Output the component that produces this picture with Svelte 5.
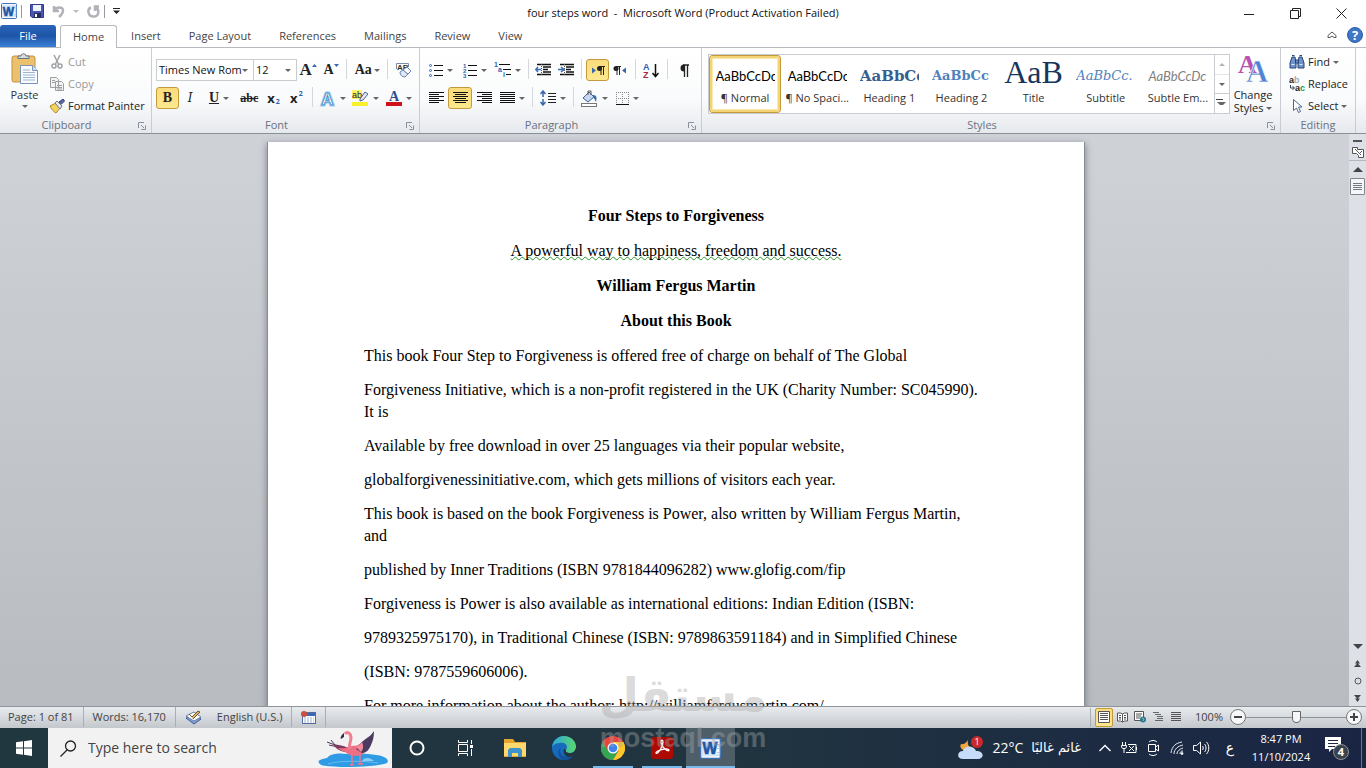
<script lang="ts">
  const tabs = ["Insert", "Page Layout", "References", "Mailings", "Review", "View"];

  const styles = [
    { name: "¶ Normal", sample: "AaBbCcDc", kind: "plain" },
    { name: "¶ No Spaci...", sample: "AaBbCcDc", kind: "plain" },
    { name: "Heading 1", sample: "AaBbCc", kind: "h1" },
    { name: "Heading 2", sample: "AaBbCc", kind: "h2" },
    { name: "Title", sample: "AaB", kind: "title" },
    { name: "Subtitle", sample: "AaBbCc.", kind: "subtitle" },
    { name: "Subtle Em...", sample: "AaBbCcDc", kind: "subtle" },
  ];

  const paragraphs = [
    "This book Four Step to Forgiveness is offered free of charge on behalf of The Global",
    "Forgiveness Initiative, which is a non-profit registered in the UK (Charity Number: SC045990).\nIt is",
    "Available by free download in over 25 languages via their popular website,",
    "globalforgivenessinitiative.com, which gets millions of visitors each year.",
    "This book is based on the book Forgiveness is Power, also written by William Fergus Martin,\nand",
    "published by Inner Traditions (ISBN 9781844096282) www.glofig.com/fip",
    "Forgiveness is Power is also available as international editions: Indian Edition (ISBN:",
    "9789325975170), in Traditional Chinese (ISBN: 9789863591184) and in Simplified Chinese",
    "(ISBN: 9787559606006).",
    "For more information about the author: http://williamfergusmartin.com/",
  ];

  let activeStyle = $state(0);
  let zoom = $state(50);
</script>

{#snippet caret()}<span class="caret"></span>{/snippet}

{#snippet launcher(label: string)}
  <button class="launcher" aria-label={label}>
    <svg width="8" height="8" viewBox="0 0 8 8" fill="none" stroke="#8b919b">
      <path d="M.5 6V.5H6M3 3l3 3M7.5 3.5v4h-4" />
    </svg>
  </button>
{/snippet}

{#snippet lines(kind: string)}
  <svg width="15" height="13" viewBox="0 0 15 13" stroke="#111">
    {#if kind === "left"}
      <path d="M0 .5h15M0 2.5h10M0 4.5h15M0 6.5h10M0 8.5h15M0 10.5h10" />
    {:else if kind === "center"}
      <path d="M0 .5h15M2 2.5h11M0 4.5h15M2 6.5h11M0 8.5h15M2 10.5h11" />
    {:else if kind === "right"}
      <path d="M0 .5h15M5 2.5h10M0 4.5h15M5 6.5h10M0 8.5h15M5 10.5h10" />
    {:else}
      <path d="M0 .5h15M0 2.5h15M0 4.5h15M0 6.5h15M0 8.5h15M0 10.5h15" />
    {/if}
  </svg>
{/snippet}

{#snippet indent(flip: boolean)}
  <svg width="17" height="14" viewBox="0 0 17 14">
    <path d="M2 1.5h14M8 4h8M8 6.5h5M8 9h8M2 11.5h14" stroke="#111" stroke-width="1.4" />
    <path d="M6.500 1v12" stroke="#555" stroke-dasharray="1 1" />
    {#if flip}
      <path d="M0 6.500h5M3 4l3 2.500L3 9" stroke="#3a6db5" stroke-width="1.500" fill="none" />
    {:else}
      <path d="M6 6.500H1M3 4L.8 6.500 3 9" stroke="#3a6db5" stroke-width="1.500" fill="none" />
    {/if}
  </svg>
{/snippet}

{#snippet wordLogo(size: number)}
  <svg width={size} height={size} viewBox="0 0 16 16">
    <rect x=".5" y=".5" width="15" height="15" rx="1" fill="#f4f9fe" stroke="#3f74b8" />
    <path d="M12 3h3v10h-3zM13 5h2M13 8h2M13 11h2" fill="#fff" stroke="#9dbde4" stroke-width=".7" />
    <rect x="1.500" y="2" width="11" height="12" fill="#d8e8f8" />
    <text x="7.500" y="12.500" text-anchor="middle" font-family="Liberation Sans" font-weight="bold" font-size="12" fill="#1d55a4" stroke="#1d55a4" stroke-width=".5">W</text>
  </svg>
{/snippet}

<div class="screen">
  <header class="titlebar">
    <div class="quick">
      {@render wordLogo(16)}
      <span class="bar"></span>
      <button aria-label="Save">
        <svg width="14" height="14" viewBox="0 0 14 14">
          <path d="M.5.500h13v13H2l-1.500-1.500z" fill="#4a55b5" stroke="#30388c" />
          <path d="M3 1h8v6H3z" fill="#eef2fb" />
          <path d="M4 9h7v5H4z" fill="#262d5e" />
          <path d="M5 10h2v3H5z" fill="#fff" />
        </svg>
      </button>
      <button class="undo" aria-label="Undo">
        <svg width="13" height="13" viewBox="0 0 13 13" fill="none" stroke="#b1b3b8" stroke-width="2.500">
          <path d="M2 1v5h5M2.500 5.500C4 2 11 1 11 5.500c0 3-2 4.500-4 6.500" />
        </svg>
        {@render caret()}
      </button>
      <button aria-label="Repeat">
        <svg width="13" height="13" viewBox="0 0 13 13" fill="none" stroke="#b1b3b8" stroke-width="2.500">
          <path d="M4 2.500C0 4 .5 11.500 6.500 11.500S12.500 4 8.500 2.500M8 6V1.500h4" />
        </svg>
      </button>
      <span class="bar"></span>
      <button aria-label="Customize Quick Access Toolbar">
        <svg width="7" height="6" viewBox="0 0 7 6"><path d="M0 0h7v1H0zM0 2.500h7L3.500 6z" fill="#222" /></svg>
      </button>
    </div>
    <h1>four steps word&nbsp; -&nbsp; Microsoft Word (Product Activation Failed)</h1>
    <div class="window">
      <button aria-label="Minimize">
        <svg width="11" height="11" viewBox="0 0 11 11"><path d="M0 6.500h10" stroke="#222" /></svg>
      </button>
      <button aria-label="Restore">
        <svg width="11" height="11" viewBox="0 0 11 11" fill="none" stroke="#222">
          <path d="M.5 2.500h8v8h-8zM2.500 2.500v-2h8v8h-2" />
        </svg>
      </button>
      <button aria-label="Close">
        <svg width="11" height="11" viewBox="0 0 11 11"><path d="M.5.500l10 10M10.500.500l-10 10" stroke="#222" /></svg>
      </button>
    </div>
  </header>

  <nav class="tabs">
    <button class="file">File</button>
    <button class="tab active">Home</button>
    {#each tabs as tab}
      <button class="tab">{tab}</button>
    {/each}
    <div class="help">
      <button aria-label="Minimize the Ribbon">
        <svg width="10" height="8" viewBox="0 0 10 8">
          <path d="M1 4.500L5 1l4 3.500v2H7L5 5 3 6.500H1z" fill="#fff" stroke="#555" />
        </svg>
      </button>
      <button aria-label="Help">
        <svg width="16" height="16" viewBox="0 0 16 16">
          <circle cx="8" cy="8" r="7.500" fill="#3f76c6" stroke="#2d5ea8" />
          <text x="8" y="12.500" text-anchor="middle" font-family="Open Sans" font-size="13" font-weight="bold" fill="#fff">?</text>
        </svg>
      </button>
    </div>
  </nav>

  <div class="ribbon">
    <section class="group clipboard">
      <div class="content">
        <button class="big paste">
          <svg width="28" height="31" viewBox="0 0 28 31">
            <rect x="1" y="3" width="23" height="26" rx="2" fill="#ecc16c" stroke="#c1914a" />
            <path d="M7 5V3h3c0-3 5-3 5 0h3v2.500H7z" fill="#d7dae0" stroke="#6c7078" />
            <path d="M9.500 12.500h12l5 5v13h-17z" fill="#f8fbff" stroke="#7c94bb" />
            <path d="M21.500 12.500v5h5" fill="#d3e0f3" stroke="#7c94bb" />
            <path d="M12 17h7M12 19.500h12M12 22h12M12 24.500h12M12 27h12" stroke="#9db2d4" />
          </svg>
          <span>Paste</span>
          {@render caret()}
        </button>
        <div class="stack">
          <button class="row" disabled>
            <svg width="16" height="16" viewBox="0 0 16 16" fill="none" stroke="#a0a2a6" stroke-width="1.500">
              <path d="M5 1l4.500 9M11 1L6.500 10" /><circle cx="5" cy="12" r="2" /><circle cx="11" cy="12" r="2" />
            </svg>
            Cut
          </button>
          <button class="row" disabled>
            <svg width="16" height="16" viewBox="0 0 16 16" fill="#f3f3f4" stroke="#9c9ea3">
              <path d="M1.500 1.500h6l2 2v8h-8zM6.500 5.500h6l2 2v7h-8z" /><path d="M3 4.500h3M3 6.500h3M8 9.500h5M8 11.500h5M8 13h5" />
            </svg>
            Copy
          </button>
          <button class="row">
            <svg width="16" height="16" viewBox="0 0 16 16">
              <path d="M1 8l6-3 4 5-4 5c-2-1-5-4-6-7z" fill="#f1d25e" stroke="#a98a2d" />
              <path d="M6 5l2-2 5 5-2 3z" fill="#e8ebf0" stroke="#6b7384" />
              <path d="M10 4l4-3 1.500 2-3 3z" fill="#5569a8" stroke="#33427c" />
            </svg>
            Format Painter
          </button>
        </div>
      </div>
      <footer>Clipboard{@render launcher("Clipboard options")}</footer>
    </section>

    <section class="group font">
      <div class="content two">
        <div class="line">
          <label class="combo name">
            <select aria-label="Font"><option>Times New Roman</option></select>{@render caret()}
          </label>
          <label class="combo size">
            <select aria-label="Font Size"><option>12</option></select>{@render caret()}
          </label>
          <button class="tool w23 serif grow" aria-label="Grow Font">A<svg width="5" height="12" viewBox="0 0 5 12"><path d="M0 3L2.500 0 5 3z" fill="#3a66ae" /></svg></button>
          <button class="tool w23 serif shrink" aria-label="Shrink Font">A<svg width="5" height="12" viewBox="0 0 5 12"><path d="M0 0h5L2.500 3z" fill="#3a66ae" /></svg></button>
          <span class="sep"></span>
          <button class="tool w32 serif case" aria-label="Change Case">Aa{@render caret()}</button>
          <span class="sep"></span>
          <button class="tool w23" aria-label="Clear Formatting">
            <svg width="17" height="17" viewBox="0 0 17 17">
              <path d="M1.500 7V1.500h12V5" fill="none" stroke="#7a8cab" />
              <text x="2" y="8" font-family="Liberation Sans" font-size="8" font-weight="bold" fill="#333">AB</text>
              <path d="M5 10l3-2 5 4-3 3c-3 0-5-2-5-5z" fill="#dfe8f5" stroke="#6b83b0" />
              <path d="M8 8l4-3 4 4-3 3z" fill="#fff" stroke="#6b83b0" />
            </svg>
          </button>
        </div>
        <div class="line">
          <button class="tool w23 serif on" aria-label="Bold"><b>B</b></button>
          <button class="tool w23 serif" aria-label="Italic"><i>I</i></button>
          <button class="tool w35 serif" aria-label="Underline"><u>U</u>{@render caret()}</button>
          <button class="tool w26 serif strike" aria-label="Strikethrough"><s>abc</s></button>
          <button class="tool w23 script" aria-label="Subscript">x<sub>2</sub></button>
          <button class="tool w23 script" aria-label="Superscript">x<sup>2</sup></button>
          <span class="sep"></span>
          <button class="tool w32" aria-label="Text Effects">
            <svg width="17" height="17" viewBox="0 0 17 17">
              <text x="8.500" y="14.500" text-anchor="middle" font-family="Liberation Sans" font-size="17" font-weight="bold" fill="#fff" stroke="#a9d3f1" stroke-width="3">A</text>
              <text x="8.500" y="14.500" text-anchor="middle" font-family="Liberation Sans" font-size="17" font-weight="bold" fill="#fff" stroke="#4a8fca">A</text>
            </svg>
            {@render caret()}
          </button>
          <button class="tool w35" aria-label="Text Highlight Color">
            <svg width="17" height="17" viewBox="0 0 17 17">
              <rect y="0" width="10" height="9" fill="#fff36a" />
              <text x="0" y="8" font-family="Liberation Sans" font-size="9" fill="#222">ab</text>
              <path d="M8 9l5-7 3 2-5 6-3 1z" fill="#e3e8f2" stroke="#4f5f8d" />
              <rect y="12" width="16" height="4" fill="#f7f02a" />
            </svg>
            {@render caret()}
          </button>
          <button class="tool w32" aria-label="Font Color">
            <svg width="16" height="17" viewBox="0 0 16 17">
              <text x="8" y="11" text-anchor="middle" font-family="Liberation Serif" font-size="14" font-weight="bold" fill="#2d4f8f">A</text>
              <rect y="12" width="16" height="4" fill="#cf1219" />
            </svg>
            {@render caret()}
          </button>
        </div>
      </div>
      <footer>Font{@render launcher("Font options")}</footer>
    </section>

    <section class="group paragraph">
      <div class="content two">
        <div class="line">
          <button class="tool w35" aria-label="Bullets">
            <svg width="14" height="14" viewBox="0 0 14 14">
              <path d="M5 2.500h9M5 7.500h9M5 12.500h9" stroke="#111" />
              <g fill="#dfeafc" stroke="#3a66ae"><circle cx="1.500" cy="2.500" r="1" /><circle cx="1.500" cy="7.500" r="1" /><circle cx="1.500" cy="12.500" r="1" /></g>
            </svg>
            {@render caret()}
          </button>
          <button class="tool w35" aria-label="Numbering">
            <svg width="14" height="15" viewBox="0 0 14 15">
              <path d="M5 2.500h9M5 7.500h9M5 12.500h9" stroke="#111" />
              <g fill="#2f5fa9" font-family="Liberation Sans" font-size="6" font-weight="bold"><text y="4.500">1</text><text y="9.500">2</text><text y="14.500">3</text></g>
            </svg>
            {@render caret()}
          </button>
          <button class="tool w32" aria-label="Multilevel List">
            <svg width="17" height="16" viewBox="0 0 17 16">
              <path d="M5 2.500h11M9 7.500h8M12 12.500h5" stroke="#111" />
              <g fill="#2f5fa9" font-family="Liberation Sans" font-size="7" font-weight="bold"><text y="5">1</text><text x="4" y="10">a</text><text x="9" y="15">i</text></g>
            </svg>
            {@render caret()}
          </button>
          <span class="sep"></span>
          <button class="tool w23" aria-label="Decrease Indent">{@render indent(false)}</button>
          <button class="tool w23" aria-label="Increase Indent">{@render indent(true)}</button>
          <span class="sep"></span>
          <button class="tool w23 on" aria-label="Left-to-Right">
            <svg width="14" height="11" viewBox="0 0 14 11"><path d="M1 2.500L5 5.500 1 8.500z" fill="#3a66ae" /><path d="M10 1v9M12.500 1v9M8 1.500h6" stroke="#222" /><circle cx="8.500" cy="3.500" r="2.500" fill="#222" /></svg>
          </button>
          <button class="tool w23" aria-label="Right-to-Left">
            <svg width="14" height="11" viewBox="0 0 14 11"><path d="M13 2.500L9 5.500l4 3z" fill="#3a66ae" /><path d="M4 1v9M6.500 1v9M3 1.500h5" stroke="#222" /><circle cx="3" cy="3.500" r="2.500" fill="#222" /></svg>
          </button>
          <span class="sep"></span>
          <button class="tool w23" aria-label="Sort">
            <svg width="16" height="17" viewBox="0 0 16 17" font-family="Liberation Sans" font-size="9" font-weight="bold">
              <text y="8" fill="#2d5fae">A</text><text y="16" fill="#a32b3c">Z</text>
              <path d="M12.500 2v12M9.500 11l3 3.500 3-3.500" fill="none" stroke="#111" stroke-width="1.500" />
            </svg>
          </button>
          <span class="sep"></span>
          <button class="tool w26" aria-label="Show paragraph marks">
            <svg width="12" height="13" viewBox="0 0 12 13"><path d="M6.500 1v12M9.500 1v12M5 1h6" stroke="#222" stroke-width="1.300" /><path d="M6 .5a3.500 3.500 0 000 7z" fill="#222" /></svg>
          </button>
        </div>
        <div class="line">
          <button class="tool w24" aria-label="Align Left">{@render lines("left")}</button>
          <button class="tool w24 on" aria-label="Center">{@render lines("center")}</button>
          <button class="tool w24" aria-label="Align Right">{@render lines("right")}</button>
          <button class="tool w32" aria-label="Justify">{@render lines("justify")}{@render caret()}</button>
          <span class="sep"></span>
          <button class="tool w32" aria-label="Line Spacing">
            <svg width="16" height="16" viewBox="0 0 16 16">
              <path d="M8 3.500h8M8 6.500h8M8 9.500h8M8 12.500h8" stroke="#222" />
              <path d="M3 1v6M3 9v6M.5 4L3 1l2.500 3M.5 12L3 15l2.500-3" fill="none" stroke="#3567b1" stroke-width="1.500" />
            </svg>
            {@render caret()}
          </button>
          <span class="sep"></span>
          <button class="tool w32" aria-label="Shading">
            <svg width="17" height="17" viewBox="0 0 17 17">
              <path d="M2 8l6-6 5 5-6 5z" fill="#c5d7f0" stroke="#405f98" /><path d="M7 5V1h3v4" fill="none" stroke="#555" />
              <path d="M12 5c4 0 4 3 3 7-1-2-2-4-3-5z" fill="#3a6db5" />
              <rect x=".5" y="13.500" width="15" height="3" fill="#fff" stroke="#777" />
            </svg>
            {@render caret()}
          </button>
          <button class="tool w35" aria-label="Borders">
            <svg width="13" height="13" viewBox="0 0 13 13">
              <path d="M.5 0v12M6.500 0v12M12.500 0v12M0 .5h13M0 6.500h13" stroke="#888" stroke-dasharray="1 1" /><path d="M0 12.500h13" stroke="#111" />
            </svg>
            {@render caret()}
          </button>
        </div>
      </div>
      <footer>Paragraph{@render launcher("Paragraph options")}</footer>
    </section>

    <section class="group styles">
      <div class="content">
        <div class="gallery">
          {#each styles as style, i}
            <button class="style" class:picked={activeStyle === i} onclick={() => (activeStyle = i)}>
              <span class="sample {style.kind}">{style.sample}</span>
              <span class="label">{style.name}</span>
            </button>
          {/each}
          <div class="spin">
            <button aria-label="Previous styles" disabled><span class="caret up"></span></button>
            <button aria-label="Next styles">{@render caret()}</button>
            <button class="more" aria-label="More styles">{@render caret()}</button>
          </div>
        </div>
        <button class="big change">
          <svg width="30" height="29" viewBox="0 0 30 29" font-family="Liberation Serif" font-weight="bold">
            <text x="0" y="19" font-size="26" fill="#b653ae">A</text>
            <text x="8" y="28" font-size="31" fill="#4f84d4" stroke="#fff" stroke-width=".5">A</text>
          </svg>
          <span>Change</span>
          <span>Styles {@render caret()}</span>
        </button>
      </div>
      <footer>Styles{@render launcher("Styles options")}</footer>
    </section>

    <section class="group editing">
      <div class="content stack">
        <button class="row">
          <svg width="16" height="15" viewBox="0 0 16 15" fill="#6f93c9" stroke="#27447a">
            <path d="M1 8l2-6h3l1 5v6H1zM15 8l-2-6h-3L9 7v6h6z" /><path d="M6.500 5h3v3h-3zM3 .5h2.500M10.500.500H13" /><path d="M2.500 9.500h3M10.500 9.500h3" stroke="#dce8fa" />
          </svg>
          Find {@render caret()}
        </button>
        <button class="row">
          <svg width="16" height="16" viewBox="0 0 16 16" font-family="Liberation Sans" font-weight="bold" font-size="9">
            <text y="7" fill="#222">a<tspan fill="#aaa">b</tspan></text><text x="6" y="15" fill="#222">a<tspan fill="#2b9a3c">c</tspan></text>
            <path d="M1.500 9v3H5M3.500 10l2 2-2 2" fill="none" stroke="#345" />
          </svg>
          Replace
        </button>
        <button class="row">
          <svg width="16" height="16" viewBox="0 0 16 16"><path d="M4.500 1.500v11l3-2.500 2 4.500 2-1-2-4.500h3.500z" fill="#fff" stroke="#4c658f" /></svg>
          Select {@render caret()}
        </button>
      </div>
      <footer>Editing</footer>
    </section>
  </div>

  <main class="workspace">
    <div class="canvas">
      <article class="paper">
        <h2>Four Steps to Forgiveness</h2>
        <p class="lead"><span>A powerful way to happiness, freedom and success.</span></p>
        <h2>William Fergus Martin</h2>
        <h2>About this Book</h2>
        {#each paragraphs as text}
          <p>{text}</p>
        {/each}
      </article>
    </div>
    <aside class="scroll">
      <button class="split" aria-label="Split"></button>
      <button class="ruler" aria-label="View Ruler">
        <svg width="12" height="12" viewBox="0 0 12 12" fill="#fff" stroke="#555"><path d="M.5 1.500h5v2h6v8h-5v-2l-2-2h-4z" /><path d="M3 3l6 6M7 8l3-3" /></svg>
      </button>
      <button class="arrow" aria-label="Scroll up"><span class="caret up"></span></button>
      <button class="thumb" aria-label="Scroll position">
        <svg width="9" height="8" viewBox="0 0 9 8"><path d="M0 .5h9M0 2.500h9M0 4.500h9M0 6.500h9" stroke="#737983" /></svg>
      </button>
      <div class="track"></div>
      <button class="arrow" aria-label="Scroll down">{@render caret()}</button>
      <button class="browse" aria-label="Previous page">
        <svg width="7" height="8" viewBox="0 0 7 8" fill="#444"><path d="M1 3.500L3.500 0 6 3.500zM0 7l3.500-4L7 7z" /></svg>
      </button>
      <button class="browse" aria-label="Select browse object">
        <svg width="8" height="8" viewBox="0 0 8 8"><circle cx="4" cy="4" r="3" fill="#ddd" stroke="#555" /></svg>
      </button>
      <button class="browse" aria-label="Next page">
        <svg width="7" height="8" viewBox="0 0 7 8" fill="#444"><path d="M0 1h7L3.500 5zM1 4.500h5L3.500 8z" /></svg>
      </button>
    </aside>
  </main>

  <div class="status">
    <button>Page: 1 of 81</button>
    <button>Words: 16,170</button>
    <button class="proof" aria-label="Proofing">
      <svg width="17" height="15" viewBox="0 0 17 15">
        <path d="M1 8l8-4 7 5-7 5z" fill="#7f9fd6" stroke="#3d5b96" /><path d="M1 6l8-4 7 5-7 4z" fill="#fff" stroke="#6d7fa3" />
        <path d="M4 4l3 3 6-6 2 1-7 7" fill="#e2b768" stroke="#6b542d" />
      </svg>
      <span>English (U.S.)</span>
    </button>
    <button aria-label="Macro recording">
      <svg width="15" height="13" viewBox="0 0 15 13">
        <rect x="1.500" y="1.500" width="13" height="11" fill="#fff" stroke="#526ca0" /><path d="M2 2h12v3H2z" fill="#3f68b4" />
        <path d="M3 7h10M3 9h10M3 11h10" stroke="#9bb0d6" stroke-dasharray="2 1" /><circle cx="3" cy="3" r="3" fill="#c8503e" />
      </svg>
    </button>
    <div class="views">
      <button class="on" aria-label="Print Layout">
        <svg width="12" height="12" viewBox="0 0 12 12" stroke="#555"><path d="M.5.500h11v11H.5z" fill="#fff" /><path d="M2 2.500h8M2 4.500h8M2 6.500h8M2 8.500h8" /></svg>
      </button>
      <button aria-label="Full Screen Reading">
        <svg width="11" height="11" viewBox="0 0 11 11" fill="#fff" stroke="#555"><path d="M.5 1h3l2 1 2-1h3v8h-3l-2 1-2-1h-3zM5.500 2v8M2 3.500h2M2 5.500h2M2 7h2M7 3.500h2M7 5.500h2M7 7h2" /></svg>
      </button>
      <button aria-label="Web Layout">
        <svg width="12" height="12" viewBox="0 0 12 12"><path d="M.5.500h9v9h-9z" fill="#fff" stroke="#555" /><path d="M2 3h6M2 5h5M2 7h4" stroke="#555" /><circle cx="9" cy="8.500" r="3" fill="#2d7593" /><path d="M8 7l2 1-1 2" stroke="#8ec76a" fill="none" /></svg>
      </button>
      <button aria-label="Outline">
        <svg width="10" height="10" viewBox="0 0 10 10" stroke="#666"><path d="M0 .5h6M2 2.500h6M4 4.500h6M4 6.500h6M2 8.500h8" /></svg>
      </button>
      <button aria-label="Draft">
        <svg width="10" height="10" viewBox="0 0 10 10" stroke="#555"><path d="M0 .5h10M0 2.500h10M0 4.500h10M0 6.500h10M0 8.500h10" /></svg>
      </button>
    </div>
    <button class="percent">100%</button>
    <button class="round" aria-label="Zoom out"><svg width="8" height="8" viewBox="0 0 8 8"><path d="M0 4h8" stroke="#444" stroke-width="2" /></svg></button>
    <input type="range" aria-label="Zoom" min="0" max="100" bind:value={zoom} />
    <button class="round" aria-label="Zoom in"><svg width="8" height="8" viewBox="0 0 8 8"><path d="M0 4h8M4 0v8" stroke="#444" stroke-width="2" /></svg></button>
  </div>

  <div class="taskbar">
    <button class="start" aria-label="Start">
      <svg width="16" height="16" viewBox="0 0 16 16" fill="#fff"><path d="M0 2.300L7 1.300v6.200H0zM8 1.200L16 0v7.500H8zM0 8.500h7v6.200l-7-1zM8 8.500h8V16l-8-1.200z" /></svg>
    </button>
    <label class="search">
      <svg width="17" height="17" viewBox="0 0 17 17" fill="none" stroke="#222" stroke-width="1.300"><circle cx="10.500" cy="6" r="5" /><path d="M7 10l-6.500 6.500" /></svg>
      <input type="text" aria-label="Search" placeholder="Type here to search" />
      <svg width="76" height="40" viewBox="0 0 76 40">
        <path d="M3 35c-2-3 3-4 8-5 4-5 13-5 20-4 10-1 24 0 29 1 8 1 14 4 11 8-10 4-48 5-60 3-4 0-7-1-8-3z" fill="#2e9be4" />
        <path d="M12 36c12-4 38-3 50-1" stroke="#68bdf0" fill="none" />
        <path d="M46 33c2-4 8-4 12 0" fill="#8ccdf7" />
        <path d="M11 14l8 3M13 17l9 2M15 12l4 5" stroke="#4b3b58" fill="none" />
        <path d="M17 16c5 1 11 1 17 5l-5 3c-6-1-10-4-12-8z" fill="#7d3b60" />
        <path d="M32 19c5-2 10 0 14-5 6-3 5 8 1 12-5 3-12 2-15 0-4-3-9-4-10-6 4 0 6 1 10-1z" fill="#ee6f83" />
        <path d="M45 15c2-2 4-4 6-5 3-2 5-4 7-7 0 5-1 10-3 14-2 5-5 8-9 8l-6-4z" fill="#4c3b61" />
        <path d="M40 19c2-1 5-3 6-5 2 4 1 8-1 10z" fill="#f38a99" />
        <path d="M34 21c-2-3 1-7 1-11 0-5-4-7-6-4" fill="none" stroke="#ee8191" stroke-width="3" />
        <path d="M28 5c-3 2-4 5-3 6l3-2z" fill="#352f43" />
        <path d="M36 26v11M44 25v11M34 37h4M42 36h5" stroke="#ee7788" stroke-width="1.500" />
      </svg>
    </label>
    <div class="apps">
      <button aria-label="Cortana"><svg width="16" height="16" viewBox="0 0 16 16"><circle cx="8" cy="8" r="6.500" fill="none" stroke="#fff" stroke-width="2" /></svg></button>
      <button aria-label="Task View">
        <svg width="17" height="16" viewBox="0 0 17 16" fill="none" stroke="#fff"><path d="M1.500 4.500h9v7h-9zM1.500 0v2.500h9V0M1.500 16v-2.500h9V16M14.500 0v4M14.500 9v7" /><path d="M13 5h3v3h-3z" fill="#fff" stroke="none" /></svg>
      </button>
      <button aria-label="File Explorer">
        <svg width="22" height="20" viewBox="0 0 22 20"><path d="M0 1h9l2 3h11v15H0z" fill="#e6a62d" /><path d="M0 5h22v13H0z" fill="#ffd86d" /><path d="M4 19v-7l2-2h10l2 2v7h-4v-4H8v4z" fill="#3e93cb" /></svg>
      </button>
      <button aria-label="Edge">
        <svg width="24" height="24" viewBox="0 0 24 24">
          <defs>
            <linearGradient id="edge" x1="0" y1="0" x2="1" y2="0"><stop offset="0" stop-color="#2aa6dd" /><stop offset="1" stop-color="#5bd66f" /></linearGradient>
          </defs>
          <circle cx="12" cy="12" r="12" fill="#1769bb" />
          <path d="M0 11C1 4 6 0 12 0c7 0 12 5 12 11 0 4-3 6-6 6-3 0-5-1-4-3 3-4-1-8-6-7-4 0-7 2-8 4z" fill="url(#edge)" />
          <path d="M14 14c-1 2 1 3 4 3 3 0 5-2 6-5v6l-3 3c-6 2-11-3-9-8z" fill="#213640" />
          <path d="M9 11c-3 6 1 11 9 10l3-1c-2 3-6 4-9 4-5-1-8-8-3-13z" fill="#12509b" />
        </svg>
      </button>
      <button class="open" aria-label="Chrome">
        <svg width="24" height="24" viewBox="0 0 24 24">
          <circle cx="12" cy="12" r="12" fill="#e9453a" /><path d="M1.600 6A12 12 0 0012 24l5-9H7z" fill="#32a653" /><path d="M12 24A12 12 0 0022.400 6H12l5.500 9z" fill="#fbc92b" />
          <circle cx="12" cy="12" r="5.500" fill="#fff" /><circle cx="12" cy="12" r="4.300" fill="#3d82ed" />
        </svg>
      </button>
      <button class="open" aria-label="Acrobat">
        <svg width="22" height="22" viewBox="0 0 22 22"><rect width="22" height="22" rx="3" fill="#ae0a04" /><path d="M5 16c-1-2 12-6 13-3 0 3-8-3-8-8 0-3 2-2 2 0 0 4-5 13-7 11z" fill="none" stroke="#fff" stroke-width="1.300" /></svg>
      </button>
      <button class="open current" aria-label="Word">{@render wordLogo(21)}</button>
    </div>
    <div class="tray">
      <button class="weather">
        <svg width="26" height="24" viewBox="0 0 26 24">
          <path d="M11 1C8 8 11 13 17 14 8 19 0 12 3 8c3 1 7-2 8-7z" fill="#f5a63b" />
          <path d="M5 23c-7 0-6-8 0-8 1-6 11-6 13 0 9 0 8 8 2 8z" fill="#c7dcf8" />
          <circle cx="19" cy="6" r="6" fill="#cb2a2a" /><text x="19" y="9" text-anchor="middle" font-family="Open Sans" font-size="9" fill="#fff">1</text>
        </svg>
        <span>22°C</span><span dir="rtl" lang="ar" class="arabic">غائم غالبًا</span>
      </button>
      <button aria-label="Show hidden icons"><svg width="12" height="8" viewBox="0 0 12 8"><path d="M.5 7L6 1.500 11.500 7" fill="none" stroke="#fff" stroke-width="1.300" /></svg></button>
      <button aria-label="Battery"><svg width="17" height="12" viewBox="0 0 17 12" fill="none" stroke="#fff"><path d="M1.500 0v3M4.500 0v3M.5 3.500h5c0 3-1 3-2.500 3s-2.500 0-2.500-3M3 6v5M7 2.500h8v8H5M15.500 5v3M8 4l5 5M13 4L8 9" /></svg></button>
      <button aria-label="Camera"><svg width="13" height="16" viewBox="0 0 13 16" fill="none" stroke="#fff"><path d="M1.500 4.500h7v7h-7zM8.500 7l3-2v6l-3-2M2 2c2-2 6-2 8 0M2 14c2 2 6 2 8 0" /></svg></button>
      <button aria-label="Network"><svg width="14" height="14" viewBox="0 0 14 14" fill="none" stroke="#e8edf2"><path d="M1 12C2 5 6 2 12 1M4 13c0-5 4-8 9-9M7 13c0-3 3-5 6-6M10 13c0-2 1-3 3-3" /><circle cx="12" cy="12.500" r="1" fill="#fff" /></svg></button>
      <button aria-label="Volume"><svg width="17" height="14" viewBox="0 0 17 14" fill="none" stroke="#fff"><path d="M.5 4.500h3l4-3.500v12l-4-3.500h-3zM9.500 5c1 1 1 3 0 4M11.500 3c2 2 2 6 0 8M13.500 1c3 3 3 9 0 12" /></svg></button>
      <button class="arabic lang" lang="ar">ع</button>
      <button class="clock"><span>8:47 PM</span><span>11/10/2024</span></button>
      <button class="notes" aria-label="Notifications">
        <svg width="26" height="24" viewBox="0 0 26 24">
          <path d="M0 1h16v12H7l-3 3v-3H0z" fill="#fff" /><path d="M3 4.500h10M3 7.500h10M3 10.500h7" stroke="#1b2943" />
          <circle cx="16" cy="16" r="7.500" fill="#3b424c" stroke="#8d949d" /><text x="16" y="20" text-anchor="middle" font-family="Open Sans" font-size="11" font-weight="bold" fill="#fff">4</text>
        </svg>
      </button>
      <span class="peek"></span>
    </div>
  </div>

  <div class="watermark">
    <span lang="ar" dir="rtl">مستقل</span>
    <span>mostaql.com</span>
  </div>
</div>

<style>
  :global(body) {
    margin: 0;
    overflow: hidden;
  }

  .screen {
    position: relative;
    display: flex;
    flex-direction: column;
    height: 100vh;
    background: #fff;
    color: #333;
    font: 11px/16px "Open Sans", "DejaVu Sans", sans-serif;
  }
  button {
    display: flex;
    align-items: center;
    justify-content: center;
    margin: 0;
    border: 0;
    padding: 0;
    background: none;
    color: inherit;
    font: inherit;
    white-space: nowrap;
  }
  svg {
    flex: none;
  }
  .caret {
    flex: none;
    display: inline-block;
    border: 3px solid transparent;
    border-top-color: #666;
    border-bottom: 0;
  }
  .caret.up {
    border-top: 0;
    border-bottom: 3px solid #666;
  }

  .titlebar {
    display: grid;
    grid-template-columns: 1fr auto 1fr;
    align-items: center;
    height: 25px;
  }
  .titlebar h1 {
    margin: 0;
    color: #111;
    font-size: 11px;
    font-weight: 400;
  }
  .quick {
    display: flex;
    align-items: center;
    gap: 8px;
    padding: 0 0 3px 1px;
  }
  .bar {
    width: 1px;
    height: 13px;
    margin-left: -4px;
    background: #999;
  }
  .undo .caret {
    margin-left: 8px;
    border-top-color: #bbb;
  }
  .window {
    display: flex;
    justify-content: flex-end;
    padding: 2px 2px 0 0;
  }
  .window button {
    width: 46px;
    height: 23px;
  }

  .tabs {
    display: flex;
    height: 22px;
    border-bottom: 1px solid #b6babf;
  }
  .file {
    width: 56px;
    margin-right: 4px;
    border-radius: 3px 3px 0 0;
    background: linear-gradient(#2a64b8, #1d54a8 50%, #3b82d8);
    color: #fff;
  }
  .tab {
    padding: 0 14px;
    color: #444;
  }
  .tab.active {
    margin-bottom: -1px;
    border: 1px solid #b6babf;
    border-bottom: 0;
    border-radius: 3px 3px 0 0;
    padding: 0 12px;
    background: #fff;
  }
  .help {
    display: flex;
    gap: 10px;
    margin-left: auto;
    padding: 0 3px 2px 0;
  }

  .ribbon {
    display: flex;
    height: 85px;
    border-bottom: 1px solid #8b9097;
    background: linear-gradient(#fff, #fafbfc 60%, #e6e9ed);
  }
  .group {
    display: flex;
    flex-direction: column;
    flex: none;
    box-sizing: border-box;
    border-right: 1px solid #c9ccd1;
    padding: 0 4px;
  }
  .clipboard {
    width: 152px;
  }
  .font {
    width: 268px;
  }
  .paragraph {
    width: 282px;
  }
  .styles {
    flex: 1;
    min-width: 0;
  }
  .editing {
    width: 75px;
    margin-right: 10px;
    padding-left: 8px;
  }
  .content {
    display: flex;
    flex: 1;
    padding-top: 3px;
  }
  .group footer {
    position: relative;
    height: 16px;
    padding-right: 18px;
    color: #6b7280;
    text-align: center;
  }
  .editing footer {
    padding-right: 4px;
  }
  .launcher {
    position: absolute;
    right: 1px;
    bottom: 3px;
  }
  .big {
    flex-direction: column;
    justify-content: flex-start;
    line-height: 13px;
  }
  .big svg {
    margin: 2px 0 4px;
  }
  .paste {
    width: 41px;
  }
  .paste .caret {
    margin-top: 4px;
  }
  .stack {
    display: flex;
    flex-direction: column;
  }
  .clipboard .stack {
    margin-left: 4px;
  }
  .row {
    justify-content: flex-start;
    gap: 3px;
    height: 22px;
    color: #222;
  }
  .row:disabled {
    color: #999;
  }

  .two {
    flex-direction: column;
    gap: 6px;
    padding-top: 11px;
  }
  .line {
    display: flex;
    height: 22px;
  }
  .combo {
    display: flex;
    align-items: center;
    box-sizing: border-box;
    height: 22px;
    border: 1px solid #c9ccd1;
    padding: 0 5px 0 2px;
    background: #fff;
  }
  .combo select {
    appearance: none;
    flex: 1;
    min-width: 0;
    border: 0;
    padding: 0;
    background: none;
    color: #111;
    font: inherit;
  }
  .name {
    width: 98px;
  }
  .size {
    width: 44px;
    margin-left: -1px;
  }
  .tool {
    gap: 4px;
    box-sizing: border-box;
    height: 22px;
    border-radius: 3px;
    color: #222;
  }
  .tool.on,
  .views .on {
    border: 1px solid #c39a39;
    background: linear-gradient(#fbdc7c, #fde88e);
  }
  .w23 {
    width: 23px;
  }
  .w24 {
    width: 24px;
  }
  .w26 {
    width: 26px;
  }
  .w32 {
    width: 32px;
  }
  .w35 {
    width: 35px;
  }
  .sep {
    width: 1px;
    height: 20px;
    margin: 0 4px;
    background: #d4d7db;
  }
  .serif {
    font-family: "Liberation Serif", serif;
    font-size: 14px;
    font-weight: 700;
  }
  .serif i {
    font-family: "DejaVu Serif", serif;
    font-weight: 400;
    font-size: 12px;
  }
  .grow,
  .shrink {
    gap: 0;
  }
  .grow {
    font-size: 17px;
  }
  .case {
    gap: 2px;
  }
  .strike {
    font-size: 12px;
  }
  .script {
    gap: 1px;
    font-size: 13px;
    font-weight: 700;
  }
  .script sub,
  .script sup {
    color: #2d5fae;
    font-size: 7px;
    line-height: 8px;
  }
  .script sub {
    padding-top: 8px;
  }
  .script sup {
    padding-bottom: 8px;
  }

  .styles .content {
    padding: 6px 0 0 2px;
  }
  .gallery {
    display: flex;
    flex: 1;
    min-width: 0;
    box-sizing: border-box;
    height: 60px;
    border: 1px solid #c9ccd1;
    background: #fff;
  }
  .style {
    flex: 1;
    flex-direction: column;
    justify-content: flex-end;
    min-width: 0;
    max-width: 80px;
    box-sizing: border-box;
    border: 3px solid transparent;
    border-radius: 3px;
    padding: 0 3px 2px;
    overflow: hidden;
  }
  .style.picked {
    margin: 1px;
    border-width: 2px;
    border-color: #f3d576;
    box-shadow: inset 0 0 0 1px #fbe9ae, 0 0 0 1px #c39a39;
  }
  .sample {
    width: 59px;
    height: 28px;
    overflow: hidden;
    color: #000;
    font: 13px/28px Lato, sans-serif;
    text-align: left;
  }
  .sample.h1,
  .sample.h2 {
    color: #365f91;
    font: bold 15px/28px "DejaVu Serif", serif;
  }
  .sample.h2 {
    color: #4f81bd;
    font-size: 13px;
  }
  .sample.title {
    color: #17365d;
    font: 32px/20px "Liberation Serif", serif;
  }
  .sample.subtitle {
    color: #4f81bd;
    font: italic 13px/28px "DejaVu Serif", serif;
  }
  .sample.subtle {
    color: #808080;
    font-style: italic;
  }
  .label {
    height: 18px;
    color: #333;
  }
  .spin {
    display: flex;
    flex-direction: column;
    width: 14px;
    border-left: 1px solid #c9ccd1;
  }
  .spin button {
    flex: 1;
    border-bottom: 1px solid #c9ccd1;
  }
  .spin button:last-child {
    border-bottom: 0;
  }
  .spin button:disabled {
    opacity: 0.5;
  }
  .more .caret::before {
    content: "";
    display: block;
    width: 7px;
    height: 1px;
    margin: -6px 0 0 -4px;
    background: #444;
  }
  .change {
    width: 46px;
    color: #222;
  }
  .change svg {
    margin: 0 0 5px;
  }
  .change .caret {
    margin-bottom: 2px;
  }

  .workspace {
    display: flex;
    flex: 1;
    min-height: 0;
    background: linear-gradient(#cfd2d7, #b8bcc1);
  }
  .canvas {
    display: flex;
    flex: 1;
    justify-content: center;
    min-width: 0;
    padding: 8px 0 0 3px;
    overflow: hidden;
  }
  .paper {
    flex: none;
    box-sizing: border-box;
    width: 816px;
    height: 1056px;
    padding: 63px 96px;
    background: #fff;
    box-shadow: -1px 0 0 #888d94, 1px 0 0 #888d94, 0 3px 7px 1px #777c83;
    color: #000;
    font: 16px/22px "Liberation Serif", serif;
  }
  .paper h2,
  .paper .lead {
    margin: 0 0 13px;
    font-size: 16px;
    text-align: center;
  }
  .lead span {
    text-decoration: underline wavy #2c9a2c 1px;
    text-decoration-skip-ink: none;
    text-underline-offset: 0;
  }
  .paper p {
    margin: 0 0 12px;
    white-space: pre-line;
  }

  .scroll {
    display: flex;
    flex-direction: column;
    align-items: center;
    width: 17px;
    background: #dde1e7;
  }
  .split {
    width: 9px;
    height: 2px;
    margin: 6px 0 2px;
    background: #555;
  }
  .ruler {
    width: 17px;
    height: 17px;
    border-bottom: 1px solid #b3b8bf;
  }
  .arrow {
    height: 17px;
  }
  .arrow .caret {
    border-width: 5px;
    border-top-color: #444;
    border-bottom: 0;
  }
  .arrow .caret.up {
    border-top: 0;
    border-bottom: 5px solid #444;
  }
  .thumb {
    box-sizing: border-box;
    width: 15px;
    height: 17px;
    border: 1px solid #7f858d;
    border-radius: 1px;
    background: #f6f7f9;
  }
  .track {
    flex: 1;
  }
  .browse {
    width: 17px;
    height: 17px;
  }

  .status {
    display: flex;
    align-items: center;
    box-sizing: border-box;
    height: 22px;
    border-top: 1px solid #8f949b;
    padding-bottom: 1px;
    background: linear-gradient(#e9ebee, #c3c8cd);
    color: #444;
  }
  .status > button {
    height: 20px;
    padding: 0 9px;
    border-right: 1px solid #a9aeb5;
  }
  .status > button:first-child {
    padding-left: 8px;
  }
  .proof span {
    margin-left: 15px;
  }
  .views {
    display: flex;
    margin-left: auto;
    border-left: 1px solid #a9aeb5;
    padding-left: 4px;
  }
  .views button {
    width: 18px;
    height: 19px;
    border-radius: 2px;
    box-sizing: border-box;
  }
  .status .percent {
    border: 0;
    padding: 0 7px 0 10px;
  }
  .status .round {
    box-sizing: border-box;
    width: 16px;
    height: 16px;
    border: 1px solid #777;
    border-radius: 50%;
    padding: 0;
    background: #f6f7f8;
  }
  .status .round:last-child {
    margin-right: 4px;
  }
  .status input {
    appearance: none;
    width: 100px;
    height: 14px;
    margin: 0;
    background: linear-gradient(#8c9198, #8c9198) center / 100% 1px no-repeat;
  }
  .status input::-webkit-slider-thumb {
    appearance: none;
    width: 9px;
    height: 12px;
    border: 1px solid #666;
    border-radius: 1px 1px 5px 5px;
    background: #f6f7f8;
  }

  .taskbar {
    display: flex;
    height: 40px;
    background: linear-gradient(90deg, #21373f, #203440 55%, #1a2544);
    color: #fff;
  }
  .start {
    width: 48px;
  }
  .search {
    display: flex;
    align-items: center;
    box-sizing: border-box;
    width: 344px;
    padding-left: 12px;
    background: #f2f2f2;
  }
  .search input {
    flex: 1;
    min-width: 0;
    margin-left: 11px;
    border: 0;
    padding: 0;
    background: none;
    color: #333;
    font: 14px/20px "Open Sans", sans-serif;
  }
  .search input::placeholder {
    color: #444;
  }
  .apps {
    display: flex;
  }
  .apps button {
    width: 49px;
    box-sizing: border-box;
  }
  .apps .open {
    background: linear-gradient(#76b9ed, #76b9ed) bottom / 40px 2px no-repeat;
  }
  .apps .current {
    background: linear-gradient(#76b9ed, #76b9ed) bottom / 100% 2px no-repeat, #4d5e69;
  }
  .tray {
    display: flex;
    align-items: center;
    margin-left: auto;
  }
  .tray button {
    width: 24px;
    height: 40px;
  }
  .tray .weather {
    width: auto;
    gap: 8px;
    margin-right: 12px;
    font-size: 14px;
  }
  .arabic {
    font-family: "DejaVu Sans", sans-serif;
    font-size: 13px;
  }
  .tray .lang {
    width: 34px;
    font-size: 14px;
  }
  .tray .clock {
    flex-direction: column;
    width: 68px;
    line-height: 18px;
  }
  .tray .notes {
    width: 46px;
  }
  .peek {
    width: 4px;
    height: 40px;
    border-left: 1px solid #6c7484;
  }

  /* overlay centred across the bottom edge of the window */
  .watermark {
    position: absolute;
    bottom: 17px;
    left: 50%;
    display: flex;
    flex-direction: column;
    align-items: center;
    transform: translateX(-50%);
    color: #a6a6a6;
    font: bold 27px/26px "Liberation Sans", sans-serif;
    opacity: 0.4;
    pointer-events: none;
  }
  .watermark span:first-child {
    padding-bottom: 8px;
    font: bold 46px/44px "DejaVu Sans", sans-serif;
  }
</style>
